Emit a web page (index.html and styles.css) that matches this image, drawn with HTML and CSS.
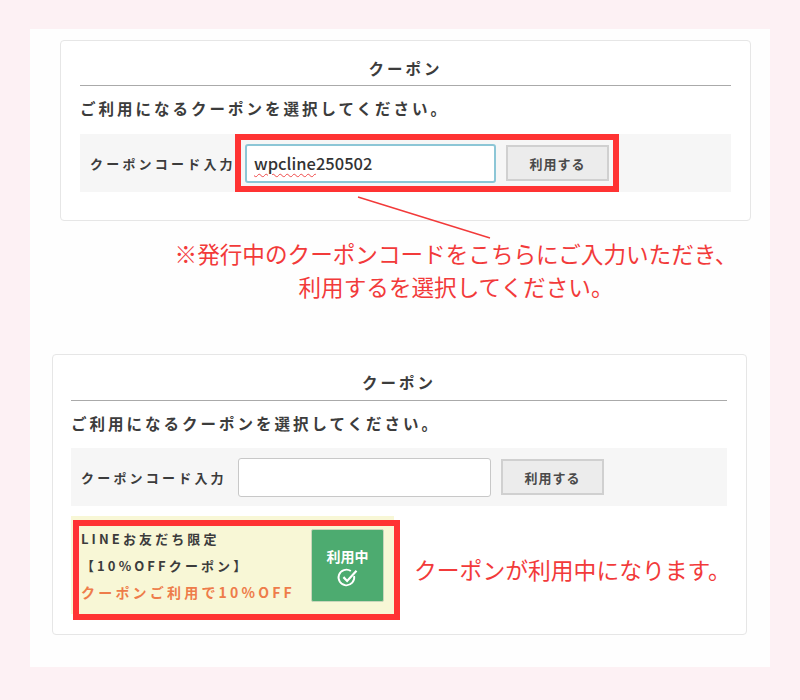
FILE: index.html
```html
<!DOCTYPE html>
<html lang="ja">
<head>
<meta charset="utf-8">
<title>クーポン</title>
<link rel="stylesheet" href="styles.css">
</head>
<body>
<main class="panel">
  <section class="card card-top">
    <h2 class="card-title">クーポン</h2>
    <p class="lead">ご利用になるクーポンを選択してください。</p>
    <div class="code-row">
      <span class="code-label">クーポンコード入力</span>
      <div class="code-input is-focus"><span class="typed">wpcline</span>250502</div>
      <button class="apply" type="button">利用する</button>
      <span class="frame frame-code"></span>
    </div>
  </section>
  <svg class="pointer" width="140" height="50" viewBox="0 0 140 50" aria-hidden="true"><line x1="4" y1="3" x2="136" y2="44" stroke="#f23a3a" stroke-width="1.4"/></svg>
  <p class="note">※発行中のクーポンコードをこちらにご入力いただき、<br>利用するを選択してください。</p>
  <section class="card card-bottom">
    <h2 class="card-title">クーポン</h2>
    <p class="lead">ご利用になるクーポンを選択してください。</p>
    <div class="code-row">
      <span class="code-label">クーポンコード入力</span>
      <div class="code-input"></div>
      <button class="apply" type="button">利用する</button>
    </div>
    <div class="coupon-row">
      <div class="coupon">
        <div class="coupon-text">
          <p class="coupon-line">LINEお友だち限定</p>
          <p class="coupon-line">【10%OFFクーポン】</p>
          <p class="coupon-line coupon-off">クーポンご利用で10%OFF</p>
        </div>
        <div class="in-use">
          <span>利用中</span>
          <svg class="in-use-icon" width="24" height="22" viewBox="0 0 22 20" aria-hidden="true"><path d="M16.6 8.2a7.2 7.2 0 1 1-3-4.6" fill="none" stroke="#fff" stroke-width="1.7"/><path d="M6.8 9.2l3.4 3.5 8.6-9.4" fill="none" stroke="#fff" stroke-width="2"/></svg>
        </div>
        <span class="frame frame-coupon"></span>
      </div>
      <p class="note note-side">クーポンが利用中になります。</p>
    </div>
  </section>
</main>
</body>
</html>
```
FILE: styles.css
```css
* { box-sizing: border-box; }
html, body { margin: 0; padding: 0; }
body {
  height: 700px;
  padding: 29px 30px 33px;
  background: #fdf1f4;
  font-family: "Noto Sans CJK JP", "Noto Sans", sans-serif;
  color: #3c3c3c;
  overflow: hidden;
}
p, h2 { margin: 0; }
.panel {
  position: relative;
  height: 638px;
  background: #fefefe;
  padding-top: 11px;
}
.card {
  background: #fff;
  border: 1px solid #e6e6e6;
  border-radius: 4px;
}
.card-top {
  width: 691px;
  height: 181px;
  margin-left: 30px;
  padding: 0 19px;
}
.card-bottom {
  width: 695px;
  height: 281px;
  margin: 51px 0 0 22px;
  padding: 0 19px 0 18px;
}
.card-title {
  height: 45px;
  padding-top: 15px;
  border-bottom: 1px solid #aaa;
  font-size: 15.5px;
  line-height: 24px;
  font-weight: 700;
  letter-spacing: 3px;
  text-align: center;
}
.card-bottom .card-title { height: 46px; }
.lead {
  margin-top: 10px;
  font-size: 15.5px;
  line-height: 24px;
  font-weight: 700;
  letter-spacing: 3px;
  white-space: nowrap;
}
.code-row {
  position: relative;
  display: flex;
  align-items: center;
  height: 58px;
  margin-top: 14px;
  padding-left: 10px;
  background: #f6f6f6;
}
.card-bottom .code-row { margin-top: 13px; }
.code-label {
  width: 155px;
  font-size: 13px;
  font-weight: 700;
  letter-spacing: 3.2px;
  white-space: nowrap;
}
.card-bottom .code-label { width: 157px; }
.code-input {
  width: 252px;
  height: 39px;
  padding-left: 8px;
  background: #fff;
  border: 1px solid #c8c8c8;
  border-radius: 3px;
  font-size: 16.5px;
  font-weight: 500;
  line-height: 37px;
  color: #333;
}
.card-bottom .code-input { width: 253px; }
.code-input.is-focus {
  width: 251px;
  padding-left: 7px;
  border: 2px solid #8cc6d6;
  line-height: 34px;
}
.typed { text-decoration: underline wavy #ef4a4a 1px; text-underline-offset: 3px; }
.apply {
  width: 103px;
  height: 36px;
  margin-left: 10px;
  padding: 0;
  background: #ececec;
  border: 2px solid #d0d0d0;
  font-family: inherit;
  font-size: 13px;
  font-weight: 700;
  letter-spacing: 1px;
  color: #4a4a4a;
}
.frame {
  position: absolute;
  border: 6px solid #ff3333;
  pointer-events: none;
}
.frame-code { left: 155px; top: 0; width: 384px; height: 58px; }
.pointer { position: absolute; left: 324px; top: 165px; }
.note {
  margin-top: 16px;
  padding-left: 112px;
  height: 66px;
  color: #f23a3a;
  font-size: 22.6px;
  line-height: 33px;
  text-align: center;
  white-space: nowrap;
}
.coupon-row {
  display: flex;
  align-items: center;
  margin-top: 10px;
}
.coupon {
  position: relative;
  flex: none;
  display: flex;
  justify-content: space-between;
  width: 323px;
  height: 98px;
  padding: 9px 10px 0;
  background: #f8f7d6;
}
.coupon-line {
  font-size: 13px;
  line-height: 27px;
  font-weight: 700;
  letter-spacing: 3.1px;
  white-space: nowrap;
}
.coupon-off {
  font-size: 14px;
  letter-spacing: 3.2px;
  color: #ee7c4a;
}
.in-use {
  display: flex;
  flex-direction: column;
  align-items: center;
  width: 73px;
  height: 73px;
  margin-top: 4px;
  padding-top: 16px;
  background: #4dab70;
  border: 1px solid #c9d6ba;
  border-radius: 2px;
  color: #fff;
  font-size: 14px;
  line-height: 20px;
  font-weight: 700;
}
.in-use-icon { margin-top: 1px; }
.frame-coupon { left: 2px; top: 4px; width: 327px; height: 100px; }
.note-side {
  flex: none;
  margin: 8px 0 0 20px;
  height: auto;
  padding: 0;
  font-size: 22.8px;
}
```
